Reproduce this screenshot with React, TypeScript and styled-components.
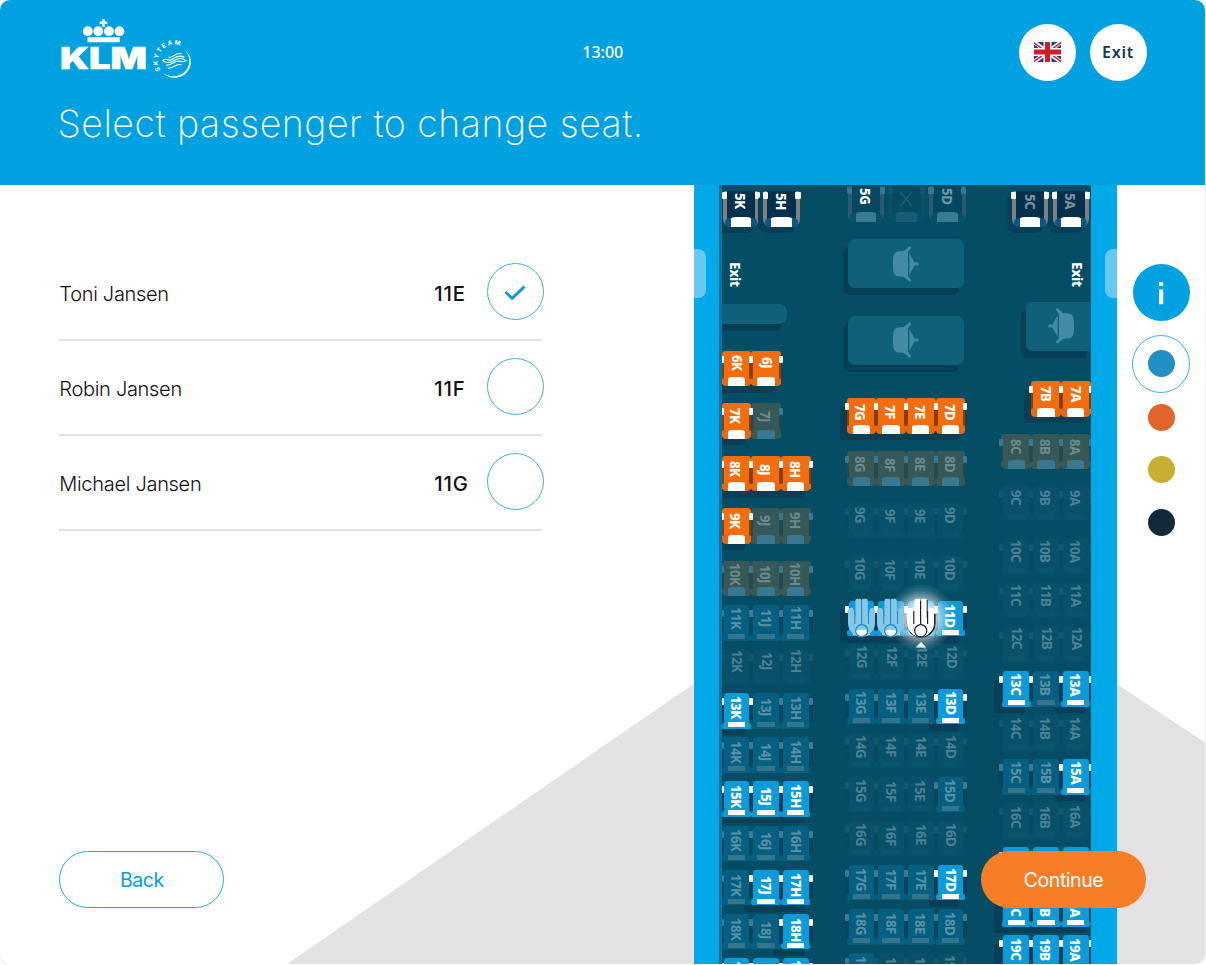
import React from "react";
import styled, { createGlobalStyle, css } from "styled-components";

const GlobalStyle = createGlobalStyle`
  * { box-sizing: border-box; }
  body { margin: 0; background: #fff; overflow: hidden; }
  button { font: inherit; padding: 0; cursor: pointer; }
`;

const blue = "#00a1e1";
const sans = `Inter, "Liberation Sans", sans-serif`;
const humanist = `"Noto Sans", "Open Sans", sans-serif`;

const Screen = styled.div`
  position: relative;
  display: flex;
  flex-direction: column;
  width: 1205px;
  height: 964px;
  overflow: hidden;
  border-radius: 10px;
  background: #fff;
  font-family: ${sans};
  color: #111;
  box-shadow: 0 0 0 1px #f1f1f1;
`;

const Header = styled.header`
  display: flex;
  flex-direction: column;
  flex: none;
  height: 185px;
  padding: 18px 58.5px 0 59px;
  background: ${blue};
  color: #fff;
`;

const TopBar = styled.div`
  display: grid;
  grid-template-columns: 1fr auto 1fr;
  height: 68px;
`;

const Clock = styled.time`
  align-self: center;
  font: 500 16px/20px ${humanist};
`;

const HeaderActions = styled.div`
  display: flex;
  justify-content: flex-end;
  align-items: center;
  gap: 13.5px;
`;

const RoundButton = styled.button`
  display: grid;
  place-items: center;
  width: 57px;
  height: 57px;
  border: 0;
  border-radius: 50%;
  background: #fff;
  color: #0f3a52;
  font: 600 16px/20px ${humanist};
  letter-spacing: 0.8px;
`;

const Title = styled.h1`
  margin: 15px 0 0 -1.5px;
  font: 200 37.5px/46px ${sans};
  letter-spacing: 0.5px;
  white-space: nowrap;
`;

const Main = styled.main`
  position: relative;
  display: flex;
  flex: 1;
  min-height: 0;
  isolation: isolate;

  &::before {
    content: "";
    position: absolute;
    inset: 0;
    z-index: -1;
    background: #e4e2e3;
    clip-path: polygon(287px 100%, 901px 356px, 100% 557.5px, 100% 100%);
  }
`;

const Passengers = styled.section`
  display: flex;
  flex-direction: column;
  justify-content: space-between;
  width: 694px;
  padding: 60.6px 0 56px 59.3px;
`;

const PassengerList = styled.ul`
  width: 483px;
  margin: 0;
  padding: 0;
  list-style: none;
`;

const PassengerRow = styled.li`
  display: flex;
  align-items: center;
  height: 95.1px;
  border-bottom: 2px solid #e2e2e2;
  font-size: 20px;
  line-height: 26px;
`;

const PassengerName = styled.span`
  flex: 1;
  padding-top: 4px;
  font-weight: 300;
  letter-spacing: -0.3px;
`;

const PassengerSeat = styled.span`
  width: 52.5px;
  padding-top: 4px;
  font-size: 20.3px;
  font-weight: 500;
  letter-spacing: 0.8px;
`;

const Check = styled.button`
  display: grid;
  place-items: center;
  width: 57px;
  height: 57px;
  margin: -1px -1.5px 0 0;
  border: 1.3px solid #3fb0df;
  border-radius: 50%;
  background: #fff;
`;

const PillButton = styled.button<{ $filled?: boolean }>`
  width: 165px;
  height: 57px;
  border-radius: 29px;
  font-size: 19.5px;
  font-weight: 400;
  letter-spacing: -0.45px;
  ${(p) =>
    p.$filled
      ? css`
          position: absolute;
          right: 59px;
          bottom: 56px;
          z-index: 5;
          border: 0;
          background: #f77d26;
          color: #fff;
        `
      : css`
          border: 1.3px solid #2ba9dc;
          background: #fff;
          color: ${blue};
        `}
`;

const Plane = styled.section`
  display: flex;
  width: 423px;
  background: #00a9e8;
`;

const Wall = styled.div<{ $side: "left" | "right" }>`
  width: ${(p) => (p.$side === "left" ? 27.5 : 26)}px;
  padding-top: 64px;
  border-right: ${(p) => (p.$side === "left" ? "3.5px solid #176f98" : "0")};
`;

const Door = styled.div<{ $side: "left" | "right" }>`
  width: 12px;
  height: 49px;
  margin-left: ${(p) => (p.$side === "left" ? 0 : "auto")};
  border-radius: ${(p) => (p.$side === "left" ? "0 8px 8px 0" : "8px 0 0 8px")};
  background: #66c9f1;
`;

const Cabin = styled.div`
  display: grid;
  grid-template-columns: 125px 154px 90px;
  width: 369.5px;
  overflow: hidden;
  background: #044d65;
`;

const Block = styled.div<{ $end?: boolean }>`
  display: flex;
  flex-direction: column;
  align-items: ${(p) => (p.$end ? "flex-end" : "flex-start")};
`;

const ExitLabel = styled.div<{ $end?: boolean }>`
  flex: none;
  width: 18px;
  height: 32px;
  margin: ${(p) => (p.$end ? "31.5px 5px 0 0" : "31.5px 0 0 4px")};
  writing-mode: vertical-rl;
  text-align: center;
  color: #fff;
  font: 800 13.5px/18px ${humanist};
  letter-spacing: -0.3px;
`;

const Bulkhead = styled.div`
  flex: none;
  width: 65.5px;
  height: 20px;
  margin-top: 13.5px;
  border-radius: 0 8px 8px 0;
  background: #0f6179;
  box-shadow: -5px 7px 0 #073f56;
`;

const GalleyBox = styled.div<{ $gap: number; $half?: boolean }>`
  display: grid;
  flex: none;
  place-items: center;
  width: ${(p) => (p.$half ? 65 : 116)}px;
  height: 49px;
  margin: ${(p) => p.$gap}px 0 0 ${(p) => (p.$half ? 0 : 1.5)}px;
  padding: ${(p) => (p.$half ? "0 0 0 5px" : "0 1px 0 0")};
  border-radius: ${(p) => (p.$half ? "7px 0 0 7px" : "7px")};
  background: #0f6179;
  box-shadow: -5px 7px 0 #073f56;
`;

const SeatRow = styled.div<{ $gap: number; $raised?: boolean }>`
  position: relative;
  z-index: ${(p) => (p.$raised ? 1 : 0)};
  display: flex;
  flex: none;
  height: 36px;
  margin-top: ${(p) => p.$gap}px;
`;

type Kind = "eco" | "ecoDim" | "faint" | "comfort" | "comfortDim" | "none";

const palette: Record<Kind, { body: string; base: string; bar: string; arm: string; side: string; text: string }> = {
  eco: { body: "#0a9bdb", base: "#0a9bdb", bar: "#fff", arm: "#fff", side: "#06405a", text: "#fff" },
  ecoDim: { body: "#045f80", base: "#045f80", bar: "#34758c", arm: "#3b7a90", side: "#06455c", text: "#5b91a5" },
  faint: { body: "#07516a", base: "#075069", bar: "#0a546d", arm: "#13586f", side: "#054b62", text: "#4c8094" },
  comfort: { body: "#f36c0e", base: "#ea670e", bar: "#fff", arm: "#fff", side: "#8b3d07", text: "#fff" },
  comfortDim: { body: "#365859", base: "#3a5855", bar: "#39788f", arm: "#39788f", side: "#27494d", text: "#6a8b90" },
  none: { body: "transparent", base: "transparent", bar: "transparent", arm: "transparent", side: "transparent", text: "transparent" },
};

const isBright = (k: Kind) => k === "eco" || k === "comfort";
const isComfort = (k: Kind) => k === "comfort" || k === "comfortDim";

const SeatBox = styled.div<{ $kind: Kind }>`
  position: relative;
  width: 29.7px;
  height: 36px;

  &::before,
  &::after {
    content: "";
    position: absolute;
    top: 5px;
    width: 4px;
    height: 7px;
    border-radius: 1px;
    background: ${(p) => palette[p.$kind].arm};
    z-index: ${(p) => (isBright(p.$kind) ? 4 : 3)};
  }
  &::before { left: -2px; }
  &::after { right: -2px; }
`;

const SeatShadow = styled.div`
  position: absolute;
  inset: 9px 6px -6px -7px;
  z-index: 0;
  border-radius: 2px;
  background: #073f56;
`;

const SeatBody = styled.div<{ $kind: Kind }>`
  position: absolute;
  z-index: 1;
  inset: 0 ${(p) => (isComfort(p.$kind) ? 0 : 2)}px 3px ${(p) => (isComfort(p.$kind) ? 0 : 2)}px;
  border-radius: 3px 3px 0 0;
  background: ${(p) => palette[p.$kind].body};
`;

const SeatSide = styled.div<{ $kind: Kind }>`
  position: absolute;
  z-index: 2;
  top: 10px;
  bottom: 8px;
  left: ${(p) => (isComfort(p.$kind) ? 0 : -2)}px;
  right: ${(p) => (isComfort(p.$kind) ? 0 : -2)}px;
  border: solid ${(p) => palette[p.$kind].side};
  border-width: 0 ${(p) => (isComfort(p.$kind) ? 2 : 4)}px;
`;

const SeatBase = styled.div<{ $kind: Kind }>`
  position: absolute;
  z-index: 2;
  left: 0.3px;
  right: 0.3px;
  bottom: 0.5px;
  height: ${(p) => (isComfort(p.$kind) ? 8.5 : 6)}px;
  border-radius: ${(p) => (isComfort(p.$kind) ? "3px 3px 4px 4px" : "2px")};
  background: ${(p) => palette[p.$kind].base};
`;

const SeatBar = styled.div<{ $kind: Kind }>`
  position: absolute;
  z-index: 2;
  left: 6.3px;
  width: 17.2px;
  bottom: ${(p) => (isComfort(p.$kind) ? 0.5 : 2)}px;
  height: ${(p) => (isComfort(p.$kind) ? 9 : 5)}px;
  border-radius: ${(p) => (isComfort(p.$kind) ? "5px 5px 0 0 / 2px 2px 0 0" : 0)};
  background: ${(p) => palette[p.$kind].bar};
`;

const SeatLabel = styled.span<{ $kind: Kind; $dx: number; $dy: number }>`
  position: absolute;
  z-index: 3;
  top: ${(p) => p.$dy - 15}px;
  left: ${(p) => 4.6 + p.$dx}px;
  width: 18px;
  height: 30px;
  writing-mode: vertical-rl;
  text-align: center;
  color: ${(p) => palette[p.$kind].text};
  font: ${(p) => (isBright(p.$kind) ? 800 : 700)} 13.3px/18px ${humanist};
  letter-spacing: -0.6px;
`;

const BusinessRow = styled.div<{ $gap: number }>`
  display: flex;
  flex: none;
  gap: 4.5px;
  margin: ${(p) => p.$gap}px 1.5px 0 1px;
`;

const BusinessSeatBox = styled.div<{ $dim?: boolean; $faint?: boolean }>`
  position: relative;
  width: 36.4px;
  height: 35.5px;
  background: ${(p) => (p.$faint ? "#054a62" : p.$dim ? "#054760" : "#04304c")};
  border-radius: 3px 3px 8px 8px;
  border: solid ${(p) => (p.$faint ? "#0a5067" : p.$dim ? "#295c70" : "#7c8083")};
  border-width: 0 4.5px;
  box-shadow: ${(p) => (p.$dim ? "none" : "-5px 6px 0 #073f56")};

  &::before,
  &::after {
    content: "";
    position: absolute;
    top: 0.5px;
    width: 5.2px;
    height: 7px;
    border-radius: 1px;
    background: ${(p) => (p.$faint ? "#0e566d" : p.$dim ? "#38748a" : "#fff")};
  }
  &::before { left: -4.8px; }
  &::after { right: -4.8px; }
`;

const BusinessCushion = styled.div<{ $dim?: boolean; $faint?: boolean }>`
  position: absolute;
  left: -2px;
  right: -2px;
  bottom: 0;
  height: 9px;
  border-radius: 5px;
  background: ${(p) => (p.$dim ? "#07506a" : "#075788")};

  &::after {
    content: "";
    position: absolute;
    left: 6px;
    right: 6px;
    bottom: 0;
    height: 10px;
    border-radius: 5px 5px 0 0 / 2px 2px 0 0;
    background: ${(p) => (p.$faint ? "#165d75" : p.$dim ? "#397b92" : "#fff")};
  }
`;

const BusinessLabel = styled.span<{ $tone: string }>`
  position: absolute;
  top: -4.6px;
  left: 4.8px;
  width: 18px;
  height: 30px;
  writing-mode: vertical-rl;
  text-align: center;
  color: ${(p) => p.$tone};
  font: 800 13.2px/18px ${humanist};
  letter-spacing: -0.3px;
`;

const BlockedMark = styled.svg`
  position: absolute;
  top: 5px;
  left: 6.5px;
`;

const Figure = styled.svg`
  position: absolute;
  top: -3px;
  left: 0;
  z-index: 6;
  overflow: visible;
`;

const Glow = styled.div`
  position: absolute;
  left: -19px;
  top: -17px;
  width: 68px;
  height: 68px;
  z-index: 5;
  border-radius: 50%;
  background: radial-gradient(closest-side, rgba(255, 255, 255, 0.95) 30%, rgba(255, 255, 255, 0.5) 58%, rgba(255, 255, 255, 0.12) 84%, rgba(255, 255, 255, 0));
`;

const Legend = styled.aside`
  display: flex;
  flex-direction: column;
  align-items: center;
  width: 88px;
  padding-top: 79px;
`;

const InfoButton = styled(RoundButton)`
  background: ${blue};
`;

const LegendRing = styled.div`
  display: grid;
  place-items: center;
  width: 58px;
  height: 58px;
  margin: 13.6px 0 11px;
  border: 1.3px solid #3fb0df;
  border-radius: 50%;
`;

const LegendDot = styled.div<{ $color: string }>`
  width: 27px;
  height: 27px;
  margin-bottom: 25.7px;
  border-radius: 50%;
  background: ${(p) => p.$color};

  ${LegendRing} & {
    margin: 0;
  }
`;

const Logo = () => (
  <svg width="140" height="68" viewBox="59 18 140 68" fill="#fff" aria-label="KLM SkyTeam">
    <path d="M102.3 19h2.4v2.6h2.6V24h-2.6v3h-2.4v-3h-2.6v-2.4h2.6z" />
    <ellipse cx="87.8" cy="31.2" rx="4.9" ry="5" />
    <ellipse cx="98.3" cy="31.2" rx="4.9" ry="5" />
    <ellipse cx="108.9" cy="31.2" rx="4.9" ry="5" />
    <ellipse cx="119.4" cy="31.2" rx="4.9" ry="5" />
    <path d="M87.5 37.2h32.2v5H87.5z" />
    <text x="60" y="69" fontFamily={sans} fontWeight="900" fontSize="30" textLength="87" lengthAdjust="spacingAndGlyphs" stroke="#fff" strokeWidth="0.5">
      KLM
    </text>
    <path id="skyArc" d="M160.6 70.2A16 16 0 0 1 188 52" fill="none" />
    <text fontFamily={sans} fontWeight="700" fontSize="6.3" letterSpacing="1.5">
      <textPath href="#skyArc">SKYTEAM</textPath>
    </text>
    <path d="M184.5 50.3C190.6 54.4 193 62.4 188.8 69.7C183.3 79.2 169.4 80.6 162.5 72.5C169.6 78.6 181.6 77.2 187 68.9C191.2 62.3 189.7 55.2 184.5 50.3Z" />
    <g fill="none" stroke="#fff" strokeWidth="1.15" strokeLinecap="round">
      <path d="M169 57.3C173 57.8 175 52.8 181 53.6" />
      <path d="M162.8 60.5C165.5 57.4 168.5 61.8 172.2 59.2S179.5 54.5 184 57.2" />
      <path d="M162.8 60.7C166.5 64.2 171 62.2 174.5 60.2S182 57.5 185.8 60.6" />
      <path d="M166.5 65C171 65.8 173.5 61.8 177.2 61.2S183.5 63.4 185.8 60.6" />
      <path d="M168.5 68.2C174 68.4 175 63.6 181 64.6" />
    </g>
  </svg>
);

const Flag = () => (
  <svg width="27" height="20" viewBox="0 0 54 40" aria-label="English">
    <path fill="#233c8c" d="M0 0h54v40H0z" />
    <path stroke="#fff" strokeWidth="8" d="M0 0l54 40M54 0L0 40" />
    <path stroke="#d01c2c" strokeWidth="3" d="M0 1.5l22 16M32 17l22-16M0 39l22-16M32 23l22 16" />
    <path stroke="#fff" strokeWidth="16" d="M27 0v40M0 20h54" />
    <path stroke="#d01c2c" strokeWidth="10" d="M27 0v40M0 20h54" />
  </svg>
);

const Teapot = ({ flip }: { flip?: boolean }) => (
  <svg width="28" height="36" viewBox="0 0 28 36" fill="#438ba0">
    <g transform={flip ? "translate(28 0) scale(-1 1)" : undefined}>
      <path d="M1 15C1 8 3 5.4 8 5.2L12 5L17.6 0L19.4 1.6L16 6V30L19.4 34.2L17.6 35.8L12 31L8 30.6C3 30.4 1 28 1 21Z" />
      <path d="M17.4 7C18.4 10 21.5 13.5 22.3 16.4H26.4V19.4H22.3C21.5 22.5 18.4 26 17.4 29Z" />
    </g>
  </svg>
);

const Traveller = ({ active }: { active?: boolean }) => {
  const fill = active ? "#fff" : "#84c7ea";
  const line = active ? "#17242d" : "#2587b8";
  return (
    <Figure width="30" height="54" viewBox="0 0 30 54">
      {active && (
        <path d="M1.6 20V26C1.6 32 6 36.6 11 38.6H19C25 36 28.8 32 28.8 25V16" fill="none" stroke={line} strokeWidth="1.6" />
      )}
      <path
        d="M1 12.5Q1 10 3.5 10H5.2Q7 10.5 7 13L8.4 20V3Q8.4.8 10.4.8H12.6Q14.6.8 14.6 3Q14.6.8 16.6.8H18.8Q20.8.8 20.8 3V20L22.4 13Q22.4 10.5 24.4 10H26Q28 10.5 28 12.5V25C28 31 24 36 18.5 38.5H11C5 36 1 31 1 25Z"
        fill={fill}
      />
      <path d="M7.8 13V26M14.6 2.5V26M21.6 13V26" fill="none" stroke={line} strokeWidth={active ? 1.2 : 1} />
      {active && <path d="M21.2 2V20" stroke={line} strokeWidth="1" />}
      <circle cx="14.7" cy="32.8" r="6.1" fill={fill} />
      <path d="M8.9 33C11.2 31.2 18.2 31.2 20.5 33A6 6 0 0 1 8.9 33Z" fill="#fff" />
      <circle cx="14.7" cy="32.8" r="6.1" fill="none" stroke={line} strokeWidth="1.2" />
      {active && <path d="M15.1 44L20.3 49.4H9.8Z" fill="#fff" />}
    </Figure>
  );
};

const codes: Record<string, Kind> = {
  E: "eco",
  P: "eco",
  A: "eco",
  e: "ecoDim",
  f: "faint",
  C: "comfort",
  c: "comfortDim",
  "-": "none",
};

type Row = { n: number; seats: string; gap: number; dx?: number; dy?: number };

const COMFORT_GAP = 16.6;
const ECO_GAP = 8.05;

const leftRows: Row[] = [
  { n: 6, seats: "CC-", gap: 27, dx: 1.5, dy: 12.5 },
  { n: 7, seats: "Cc-", gap: COMFORT_GAP, dy: 13 },
  { n: 8, seats: "CCC", gap: COMFORT_GAP, dy: 13.5 },
  { n: 9, seats: "Ccc", gap: COMFORT_GAP, dy: 12.5 },
  { n: 10, seats: "ccc", gap: COMFORT_GAP, dy: 13 },
  { n: 11, seats: "eee", gap: 8.4, dx: 0.8, dy: 12.5 },
  { n: 12, seats: "fff", gap: ECO_GAP, dx: 1.5, dy: 11.5 },
  { n: 13, seats: "Eee", gap: ECO_GAP, dx: 1, dy: 14 },
  { n: 14, seats: "eee", gap: ECO_GAP, dx: 0.8, dy: 14.5 },
  { n: 15, seats: "EEE", gap: ECO_GAP, dx: 0.8, dy: 14.5 },
  { n: 16, seats: "eee", gap: ECO_GAP, dx: 1, dy: 15 },
  { n: 17, seats: "eEE", gap: ECO_GAP, dx: 0.8, dy: 15.3 },
  { n: 18, seats: "eeE", gap: ECO_GAP, dx: 0.8, dy: 16 },
  { n: 19, seats: "EEE", gap: ECO_GAP, dx: 0.8, dy: 14.5 },
];

const middleRows: Row[] = [
  { n: 7, seats: "CCCC", gap: 33.8, dy: 13.5 },
  { n: 8, seats: "cccc", gap: COMFORT_GAP, dy: 13.5 },
  { n: 9, seats: "ffff", gap: COMFORT_GAP, dy: 12 },
  { n: 10, seats: "ffff", gap: COMFORT_GAP, dy: 12.8 },
  { n: 11, seats: "PPAE", gap: 8.6, dx: 0.5, dy: 14.8 },
  { n: 12, seats: "ffff", gap: ECO_GAP, dx: 1.7, dy: 11.5 },
  { n: 13, seats: "eeeE", gap: ECO_GAP, dx: 0.8, dy: 14 },
  { n: 14, seats: "ffff", gap: ECO_GAP, dx: 0.8, dy: 13.5 },
  { n: 15, seats: "fffe", gap: ECO_GAP, dx: 0.5, dy: 14 },
  { n: 16, seats: "ffff", gap: ECO_GAP, dx: 0.8, dy: 14 },
  { n: 17, seats: "eeeE", gap: ECO_GAP, dx: 0.8, dy: 14.8 },
  { n: 18, seats: "eeee", gap: ECO_GAP, dx: 0.5, dy: 14.5 },
  { n: 19, seats: "efff", gap: ECO_GAP, dx: 0.5, dy: 14 },
];

const rightRows: Row[] = [
  { n: 7, seats: "-CC", gap: 30.6, dx: 0.8, dy: 12.5 },
  { n: 8, seats: "ccc", gap: COMFORT_GAP, dx: 0.5, dy: 12.7 },
  { n: 9, seats: "fff", gap: COMFORT_GAP, dx: 0.5, dy: 11.5 },
  { n: 10, seats: "fff", gap: COMFORT_GAP, dx: 0.5, dy: 12 },
  { n: 11, seats: "fff", gap: ECO_GAP, dx: 1, dy: 12.5 },
  { n: 12, seats: "fff", gap: ECO_GAP, dx: 1.7, dy: 11 },
  { n: 13, seats: "EeE", gap: ECO_GAP, dx: 0.5, dy: 13.5 },
  { n: 14, seats: "fff", gap: ECO_GAP, dx: 0.5, dy: 13.2 },
  { n: 15, seats: "eeE", gap: ECO_GAP, dx: 0.7, dy: 13 },
  { n: 16, seats: "fff", gap: ECO_GAP, dx: 0.5, dy: 13.5 },
  { n: 17, seats: "EEE", gap: ECO_GAP, dy: 14 },
  { n: 18, seats: "EEE", gap: ECO_GAP, dx: 0.5, dy: 14 },
  { n: 19, seats: "EEE", gap: ECO_GAP, dx: 0.5, dy: 14 },
];

const SeatRows = ({ rows, letters }: { rows: Row[]; letters: string }) => (
  <>
    {rows.map((row) => (
      <SeatRow key={row.n} $gap={row.gap} $raised={row.seats.includes("A")}>
        {row.seats.split("").map((code, i) => {
          const kind = codes[code];
          const taken = code === "P" || code === "A";
          return (
            <SeatBox key={letters[i]} $kind={kind}>
              {isBright(kind) && <SeatShadow />}
              <SeatBody $kind={kind} />
              <SeatSide $kind={kind} />
              <SeatBase $kind={kind} />
              <SeatBar $kind={kind} />
              {!taken && kind !== "none" && (
                <SeatLabel $kind={kind} $dx={(row.dx ?? 0) + i * 0.25} $dy={row.dy ?? 13}>
                  {row.n}
                  {letters[i]}
                </SeatLabel>
              )}
              {code === "A" && <Glow />}
              {taken && <Traveller active={code === "A"} />}
            </SeatBox>
          );
        })}
      </SeatRow>
    ))}
  </>
);

const BusinessSeat = ({ label, dim, tone = "#fff" }: { label?: string; dim?: boolean; tone?: string }) => (
  <BusinessSeatBox $dim={dim} $faint={!label}>
    <BusinessCushion $dim={dim} $faint={!label} />
    {label ? (
      <BusinessLabel $tone={tone}>{label}</BusinessLabel>
    ) : (
      <BlockedMark width="14" height="16" viewBox="0 0 14 16" stroke="#1d6178" strokeWidth="1.2">
        <path d="M1 1L13 15M13 1L1 15" />
      </BlockedMark>
    )}
  </BusinessSeatBox>
);

const passengers = [
  { name: "Toni Jansen", seat: "11E", selected: true },
  { name: "Robin Jansen", seat: "11F", selected: false },
  { name: "Michael Jansen", seat: "11G", selected: false },
];

export default function App() {
  return (
    <>
      <GlobalStyle />
      <Screen>
        <Header>
          <TopBar>
            <Logo />
            <Clock>13:00</Clock>
            <HeaderActions>
              <RoundButton aria-label="Language">
                <Flag />
              </RoundButton>
              <RoundButton>Exit</RoundButton>
            </HeaderActions>
          </TopBar>
          <Title>Select passenger to change seat.</Title>
        </Header>
        <Main>
          <Passengers>
            <PassengerList>
              {passengers.map((p) => (
                <PassengerRow key={p.seat}>
                  <PassengerName>{p.name}</PassengerName>
                  <PassengerSeat>{p.seat}</PassengerSeat>
                  <Check aria-label={`Select ${p.name}`}>
                    {p.selected && (
                      <svg width="22" height="16" viewBox="0 0 22 16" fill="none" stroke="#1499d3" strokeWidth="2.9">
                        <path d="M1.5 8L8.2 14.4L20.5 2.6" />
                      </svg>
                    )}
                  </Check>
                </PassengerRow>
              ))}
            </PassengerList>
            <PillButton>Back</PillButton>
          </Passengers>
          <Plane>
            <Wall $side="left">
              <Door $side="left" />
            </Wall>
            <Cabin>
              <Block>
                <BusinessRow $gap={6}>
                  <BusinessSeat label="5K" />
                  <BusinessSeat label="5H" />
                </BusinessRow>
                <ExitLabel>Exit</ExitLabel>
                <Bulkhead />
                <SeatRows rows={leftRows} letters="KJH" />
              </Block>
              <Block>
                <BusinessRow $gap={1}>
                  <BusinessSeat label="5G" dim />
                  <BusinessSeat dim />
                  <BusinessSeat label="5D" dim tone="#6d94a3" />
                </BusinessRow>
                <GalleyBox $gap={17.5}>
                  <Teapot />
                </GalleyBox>
                <GalleyBox $gap={27.5}>
                  <Teapot />
                </GalleyBox>
                <SeatRows rows={middleRows} letters="GFED" />
              </Block>
              <Block $end>
                <BusinessRow $gap={6}>
                  <BusinessSeat label="5C" tone="#7c8f9b" />
                  <BusinessSeat label="5A" tone="#7c8f9b" />
                </BusinessRow>
                <ExitLabel $end>Exit</ExitLabel>
                <GalleyBox $gap={11.5} $half>
                  <Teapot flip />
                </GalleyBox>
                <SeatRows rows={rightRows} letters="CBA" />
              </Block>
            </Cabin>
            <Wall $side="right">
              <Door $side="right" />
            </Wall>
          </Plane>
          <Legend>
            <InfoButton aria-label="Information">
              <svg width="8" height="24" viewBox="0 0 8 24" fill="#fff">
                <path d="M2 1.2h4.2v3.8H2zM2 8.4h4.2v14.8H2z" />
              </svg>
            </InfoButton>
            <LegendRing>
              <LegendDot $color="#2390c5" />
            </LegendRing>
            <LegendDot $color="#e0642b" />
            <LegendDot $color="#c9ae31" />
            <LegendDot $color="#132a3b" />
          </Legend>
          <PillButton $filled>Continue</PillButton>
        </Main>
      </Screen>
    </>
  );
}
